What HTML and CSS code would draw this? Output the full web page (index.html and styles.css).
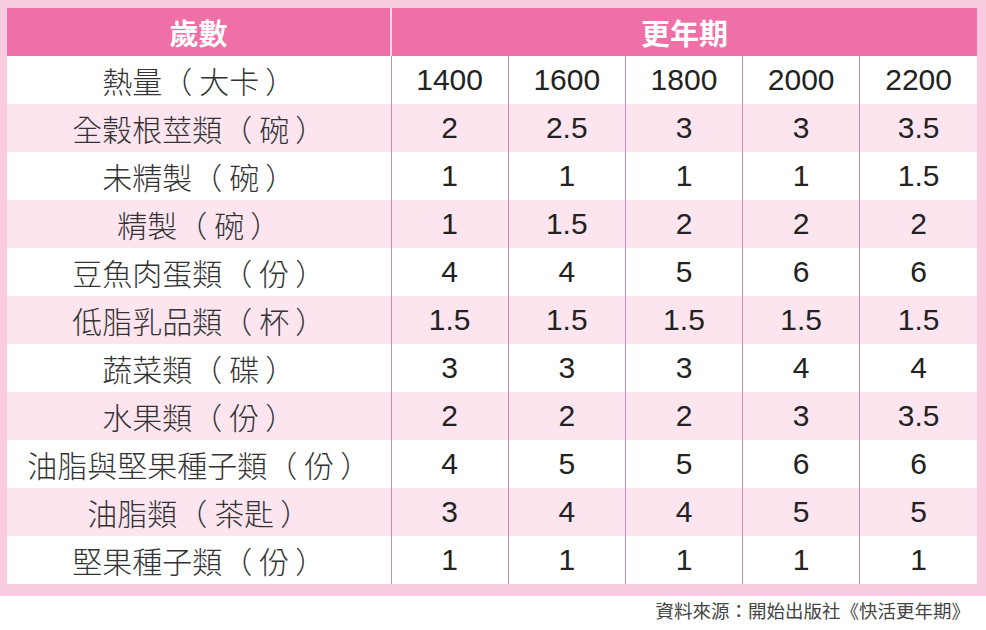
FILE: index.html
```html
<!DOCTYPE html>
<html lang="zh-Hant">
<head>
<meta charset="utf-8">
<title>更年期飲食建議</title>
<link rel="stylesheet" href="styles.css">
</head>
<body>
<div class="frame">
  <table class="diet">
    <colgroup>
      <col class="c-label">
      <col class="c-num"><col class="c-num"><col class="c-num"><col class="c-num"><col class="c-num">
    </colgroup>
    <thead>
      <tr class="head">
        <th class="h-age">歲數</th>
        <th class="h-period" colspan="5">更年期</th>
      </tr>
    </thead>
    <tbody>
      <tr><td class="label">熱量（<span class="unit">大卡</span>）</td><td>1400</td><td>1600</td><td>1800</td><td>2000</td><td>2200</td></tr>
      <tr class="alt"><td class="label">全穀根莖類（<span class="unit">碗</span>）</td><td>2</td><td>2.5</td><td>3</td><td>3</td><td>3.5</td></tr>
      <tr><td class="label">未精製（<span class="unit">碗</span>）</td><td>1</td><td>1</td><td>1</td><td>1</td><td>1.5</td></tr>
      <tr class="alt"><td class="label">精製（<span class="unit">碗</span>）</td><td>1</td><td>1.5</td><td>2</td><td>2</td><td>2</td></tr>
      <tr><td class="label">豆魚肉蛋類（<span class="unit">份</span>）</td><td>4</td><td>4</td><td>5</td><td>6</td><td>6</td></tr>
      <tr class="alt"><td class="label">低脂乳品類（<span class="unit">杯</span>）</td><td>1.5</td><td>1.5</td><td>1.5</td><td>1.5</td><td>1.5</td></tr>
      <tr><td class="label">蔬菜類（<span class="unit">碟</span>）</td><td>3</td><td>3</td><td>3</td><td>4</td><td>4</td></tr>
      <tr class="alt"><td class="label">水果類（<span class="unit">份</span>）</td><td>2</td><td>2</td><td>2</td><td>3</td><td>3.5</td></tr>
      <tr><td class="label">油脂與堅果種子類（<span class="unit">份</span>）</td><td>4</td><td>5</td><td>5</td><td>6</td><td>6</td></tr>
      <tr class="alt"><td class="label">油脂類（<span class="unit">茶匙</span>）</td><td>3</td><td>4</td><td>4</td><td>5</td><td>5</td></tr>
      <tr><td class="label">堅果種子類（<span class="unit">份</span>）</td><td>1</td><td>1</td><td>1</td><td>1</td><td>1</td></tr>
    </tbody>
  </table>
</div>
<p class="source">資料來源：開始出版社《快活更年期》</p>
</body>
</html>
```

FILE: styles.css
```css
html, body {
  margin: 0;
  padding: 0;
  background: #ffffff;
}

body {
  width: 986px;
  font-family: "Noto Sans CJK TC", "Noto Sans", sans-serif;
  text-spacing-trim: space-all;
}

.frame {
  background: #f8cbe0;
  padding: 8px 9px 12px 7px;
}

.diet {
  width: 970px;
  border-collapse: collapse;
  table-layout: fixed;
}

.c-label { width: 384px; }
.c-num { width: 117.2px; }

.diet th,
.diet td {
  height: 48px;
  padding: 0;
  text-align: center;
  vertical-align: middle;
  line-height: 48px;
}

.head th {
  background: #ef6fa7;
  color: #ffffff;
  font-size: 29px;
  font-weight: 700;
  font-family: "Noto Sans CJK TC", sans-serif;
}

.h-age {
  border-right: 2px solid #fbd9e8;
}

.diet tbody tr {
  background: #ffffff;
}

.diet tbody tr.alt {
  background: #fde5f0;
}

.diet td {
  font-family: "Liberation Sans", Arial, sans-serif;
  font-size: 30px;
  color: #222222;
  border-left: 1px solid #c98aab;
}

.diet td:first-child {
  border-left: none;
}

.diet td.label {
  font-family: "Noto Sans CJK TC", sans-serif;
  font-weight: 300;
  font-size: 30px;
  color: #333333;
  border-right: 1px solid #c98aab;
}

.unit {
  margin: 0 6px 0 7px;
}

.source {
  margin: 0;
  padding-right: 16px;
  text-align: right;
  font-family: "Noto Sans CJK TC", sans-serif;
  font-size: 18.5px;
  line-height: 28px;
  color: #444444;
}
```
